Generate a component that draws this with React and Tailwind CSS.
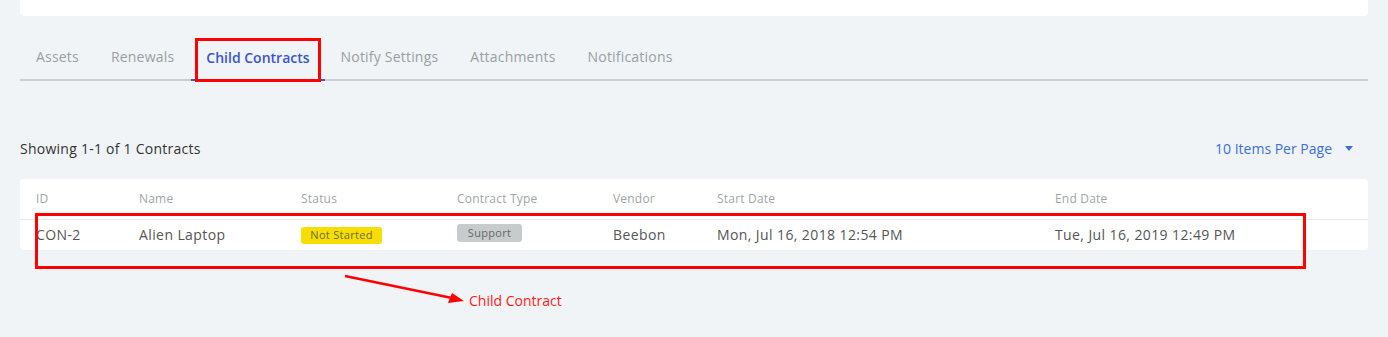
const tabs = ['Assets', 'Renewals', 'Child Contracts', 'Notify Settings', 'Attachments', 'Notifications']

const columns = [
  { label: 'ID', width: 'w-[103px]' },
  { label: 'Name', width: 'w-[162px]' },
  { label: 'Status', width: 'w-[156px]' },
  { label: 'Contract Type', width: 'w-[156px]' },
  { label: 'Vendor', width: 'w-[104px]' },
  { label: 'Start Date', width: 'w-[338px]' },
  { label: 'End Date', width: 'flex-1' },
]

export default function App() {
  return (
    <div className="relative h-[337px] w-[1388px] overflow-hidden bg-[#f0f4f7] px-5 font-['Open_Sans',sans-serif]">
      <div className="h-[16px] rounded-b-[4px] bg-white" />

      {/* tabs */}
      <div className="mt-[24px] flex h-[41px] border-b-2 border-[#c9ced2]">
        {tabs.map((tab) => {
          const active = tab === 'Child Contracts'
          return (
            <div
              key={tab}
              className={
                active
                  ? '-mb-[2px] ml-[1px] flex items-center border-b-2 border-[#3b5bd6] px-[15px] pb-[5px] text-[14px] font-semibold text-[#3b55c9]'
                  : 'flex items-center px-4 pb-[7px] text-[14px] tracking-[0.2px] text-[#9a9ea3]'
              }
            >
              {tab}
            </div>
          )
        })}
      </div>

      <div className="mt-[58px] flex items-center justify-between leading-[19px]">
        <p className="text-[14px] tracking-[0.25px] text-[#333]">Showing 1-1 of 1 Contracts</p>
        <div className="mr-[15px] flex items-center gap-[13px] text-[14px] text-[#3b6fd8]">
          <span>10 Items Per Page</span>
          <svg width="8" height="5" viewBox="0 0 8 5">
            <path d="M0 0h8L4 5z" fill="#3b6fd8" />
          </svg>
        </div>
      </div>

      {/* table */}
      <div className="mt-[21px] rounded-[4px] bg-white">
        <div className="flex h-[41px] items-center border-b border-[#e6e8ea] pl-4 text-[12px] leading-[16px] tracking-[0.2px] text-[#a0a4a8]">
          {columns.map((c) => (
            <div key={c.label} className={c.width}>
              {c.label}
            </div>
          ))}
        </div>
        <div className="flex h-[30px] items-center pl-4 text-[14px] leading-[20px] tracking-[0.4px] text-[#555]">
          <div className="w-[103px]">CON-2</div>
          <div className="w-[162px]">Alien Laptop</div>
          <div className="flex w-[156px]">
            <span className="flex h-[17px] w-[81px] items-center justify-center rounded-[3px] bg-[#f7de00] text-[11px] tracking-[0.3px] text-[#6b6b3a]">
              Not Started
            </span>
          </div>
          <div className="-mt-[4px] flex w-[156px]">
            <span className="flex h-[18px] w-[65px] items-center justify-center rounded-[3px] bg-[#c8cbcc] text-[11px] tracking-[0.3px] text-[#666]">
              Support
            </span>
          </div>
          <div className="w-[104px]">Beebon</div>
          <div className="w-[338px]">Mon, Jul 16, 2018 12:54 PM</div>
          <div className="flex-1">Tue, Jul 16, 2019 12:49 PM</div>
        </div>
      </div>

      {/* annotations */}
      <div className="absolute left-[195px] top-[38px] h-[44px] w-[126px] border-[3px] border-[#ff0000]" />
      <div className="absolute left-[35px] top-[213px] h-[56px] w-[1271px] border-[3px] border-[#ff0000]" />
      <svg className="absolute left-[340px] top-[270px]" width="130" height="40" viewBox="0 0 130 40">
        <line x1="5" y1="6" x2="112" y2="28" stroke="#ff0000" strokeWidth="2.5" />
        <path d="M124 31L108 33L112 23z" fill="#ff0000" />
      </svg>
      <span className="absolute left-[469px] top-[290px] text-[14px] text-[#ff1a1a]">Child Contract</span>
    </div>
  )
}
